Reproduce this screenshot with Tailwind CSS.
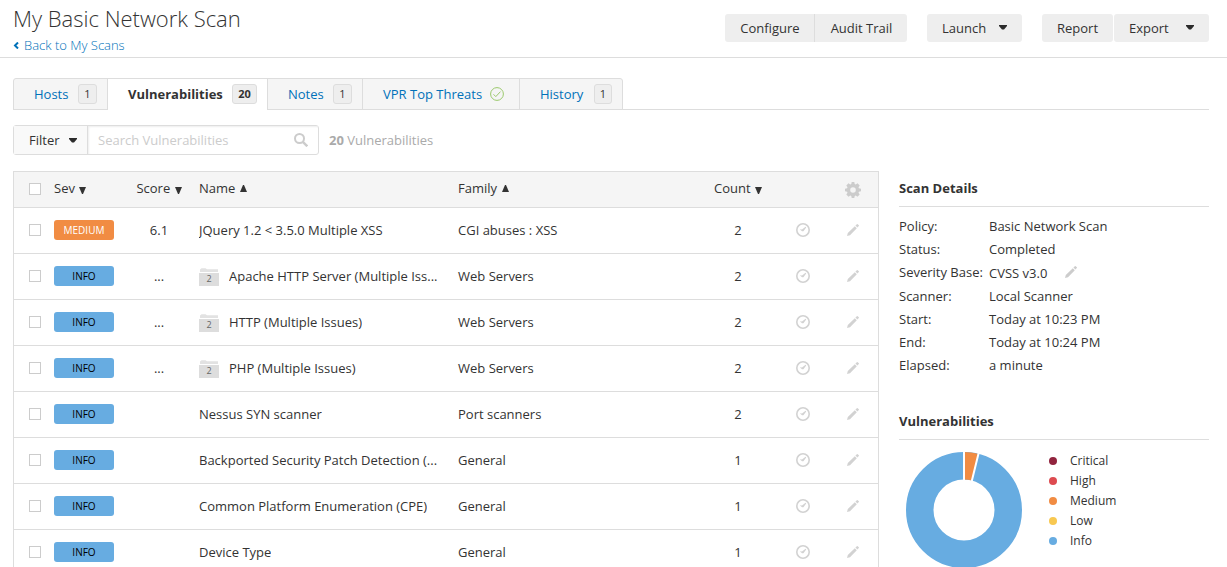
<!DOCTYPE html>
<html lang="en">
<head>
<meta charset="utf-8">
<title>My Basic Network Scan</title>
<script src="https://cdn.jsdelivr.net/npm/@tailwindcss/browser@4"></script>
</head>
<body class="bg-white font-['Open_Sans',sans-serif] text-[13px] leading-5 text-[#333] overflow-hidden">
<svg class="hidden">
  <symbol id="caret" viewBox="0 0 8 5"><path d="M0 0h8v1L5 4.500H3L0 1z" fill="#2b2b2b"/></symbol>
  <symbol id="down" viewBox="0 0 7 7"><path d="M0 0h7L4 7H3z" fill="#333"/></symbol>
  <symbol id="up" viewBox="0 0 7 7"><path d="M3 0h1l3 7H0z" fill="#333"/></symbol>
  <symbol id="clock" viewBox="0 0 14 14"><circle cx="7" cy="7" r="6.200" fill="none" stroke="currentColor" stroke-width="1.600"/><path d="M3.800 6.300l2.200.2L9.600 3.800l.6.600L7.400 8.300H6z" fill="currentColor"/></symbol>
  <symbol id="pencil" viewBox="0 0 12 12"><path d="M0 12l.8-3L7.800 2.200l2 2L3 11.200zM8.400 1.600L9.900.2q.4-.4.800 0l1.100 1.100q.4.400 0 .8l-1.400 1.500z" fill="currentColor"/></symbol>
  <symbol id="folder" viewBox="0 0 20 18"><path d="M1 4V1.500L2.500.3h4L8 1.300h11V4z" fill="#e2e2e2"/><path d="M0 5h20v13H0z" fill="#ddd"/></symbol>
  <symbol id="gear" viewBox="0 0 16 16"><path fill-rule="evenodd" fill="currentColor" d="M6.700 0h2.600l.4 2.100 1 .4L12.500 1.300l2.200 2.200-1.200 1.800.4 1L16 6.700v2.600l-2.100.4-.4 1 1.200 1.800-2.200 2.200-1.800-1.200-1 .4L9.300 16H6.700l-.4-2.100-1-.4-1.800 1.200-2.200-2.200 1.200-1.800-.4-1L0 9.300V6.700l2.100-.4.400-1L1.300 3.500l2.200-2.200 1.800 1.200 1-.4zM8 5.200a2.800 2.800 0 100 5.600 2.800 2.800 0 000-5.600z"/></symbol>
</svg>

<header class="flex h-[58px] justify-between border-b border-[#ddd] pl-[13px] pr-[18px]">
  <div class="pt-1">
    <h1 class="pb-px text-[22px] font-light leading-[29px]">My Basic Network Scan</h1>
    <a href="#" class="flex items-center gap-1 font-light leading-[22px] text-[#0071b9]">
      <svg class="h-[7px] w-[7px]" viewBox="0 0 7 7"><path d="M5 .5L2 3.500l3 3" fill="none" stroke="#0071b9" stroke-width="2"/></svg>Back to My Scans</a>
  </div>
  <div class="flex items-start gap-5 pt-[14px]">
    <div class="flex">
      <button class="h-7 w-[90px] rounded-l-[3px] border-r border-[#ddd] bg-[#eee] pl-px">Configure</button>
      <button class="h-7 w-[92px] rounded-r-[3px] bg-[#eee] pl-px">Audit Trail</button>
    </div>
    <button class="flex h-7 w-[95px] items-center justify-between rounded-[3px] bg-[#eee] px-[15px]">Launch<svg class="mb-px h-[5px] w-2"><use href="#caret"/></svg></button>
    <div class="flex gap-px">
      <button class="h-7 w-[71px] rounded-[3px] bg-[#eee]">Report</button>
      <button class="flex h-7 w-[95px] items-center justify-between rounded-[3px] bg-[#eee] px-[15px]">Export<svg class="mb-px h-[5px] w-2"><use href="#caret"/></svg></button>
    </div>
  </div>
</header>

<main class="pl-[13px] pr-[18px] pt-5">
  <nav class="flex border-b border-[#ddd]">
    <div class="-mb-px flex h-8 rounded-t-[3px] border border-[#ddd] bg-[#f5f5f5] text-[#0071b9]">
      <a href="#" class="flex w-[94px] items-center justify-between border-r border-[#ddd] pl-5 pr-[10px]">Hosts<span class="flex h-5 w-[19px] items-center justify-center rounded-[3px] border border-[#ddd] bg-[#eee] text-[11px] text-[#333]">1</span></a>
      <a href="#" class="-mb-px flex w-[160px] items-center justify-between border-r border-[#ddd] bg-white pb-px pl-5 pr-[10px] font-bold text-[#333]">Vulnerabilities<span class="flex h-5 w-[25px] items-center justify-center rounded-[3px] border border-[#ddd] bg-[#eee] text-[11px] text-[#333]">20</span></a>
      <a href="#" class="flex w-[95px] items-center justify-between border-r border-[#ddd] pl-5 pr-[10px]">Notes<span class="flex h-5 w-[19px] items-center justify-center rounded-[3px] border border-[#ddd] bg-[#eee] text-[11px] text-[#333]">1</span></a>
      <a href="#" class="flex w-[157px] items-center justify-between border-r border-[#ddd] pl-5 pr-[15px]">VPR Top Threats<svg class="h-[14px] w-[14px]" viewBox="0 0 14 14" fill="none" stroke="#9bc96c"><circle cx="7" cy="7" r="6.400"/><path d="M3.500 7.300l2.300 2.300 4.700-5"/></svg></a>
      <a href="#" class="flex w-[102px] items-center justify-between pl-5 pr-[10px]">History<span class="flex h-5 w-[18px] items-center justify-center rounded-[3px] border border-[#ddd] bg-[#eee] text-[11px] text-[#333]">1</span></a>
    </div>
  </nav>

  <div class="mt-[15px] flex items-center">
    <div class="flex h-[30px] w-[306px] rounded-[3px] border border-[#ddd]">
      <button class="flex w-[74px] items-center justify-between border-r border-[#ddd] bg-[#f9f9f9] pl-[15px] pr-[10px]">Filter<svg class="h-[5px] w-2"><use href="#caret"/></svg></button>
      <label class="flex min-w-0 flex-1 items-center pl-[10px] pr-[10px] shadow-[inset_1px_1px_2px_#eee]">
        <input type="text" aria-label="Search Vulnerabilities" placeholder="Search Vulnerabilities" class="min-w-0 flex-1 bg-transparent outline-none placeholder:text-[#ccc]">
        <svg class="h-[14px] w-[14px]" viewBox="0 0 14 14" fill="none" stroke="#ccc" stroke-width="2"><circle cx="5.500" cy="5.500" r="4.500"/><path d="M8.800 8.800l4.500 4.500" stroke-width="2.400"/></svg>
      </label>
    </div>
    <p class="ml-[10px] text-[#aaa]"><b>20</b> Vulnerabilities</p>
  </div>

  <div class="mt-4 flex items-start gap-5">
    <div class="min-w-0 flex-1 border border-[#ddd]">
      <table class="w-full table-fixed border-collapse">
        <colgroup><col class="w-10"><col class="w-[65px]"><col class="w-20"><col><col class="w-60"><col class="w-20"><col class="w-[50px]"><col class="w-[50px]"></colgroup>
        <thead>
          <tr class="h-[35px] bg-[#f5f5f5] text-left">
            <th class="pl-[15px]"><input type="checkbox" aria-label="Select all" class="block h-3 w-3 appearance-none border border-[#ccc] bg-white"></th>
            <th class="pb-[2px] font-normal">Sev <svg class="ml-px inline h-[7px] w-[7px] align-[-1px]"><use href="#down"/></svg></th>
            <th class="pb-[2px] text-center font-normal">Score <svg class="ml-px inline h-[7px] w-[7px] align-[-1px]"><use href="#down"/></svg></th>
            <th class="pb-[2px] font-normal">Name <svg class="ml-px inline h-[7px] w-[7px] align-[1px]"><use href="#up"/></svg></th>
            <th class="pb-[2px] font-normal">Family <svg class="ml-[2px] inline h-[7px] w-[7px] align-[1px]"><use href="#up"/></svg></th>
            <th class="pb-[2px] text-center font-normal">Count <svg class="ml-px inline h-[7px] w-[7px] align-[-1px]"><use href="#down"/></svg></th>
            <th></th>
            <th class="pt-[2px]"><button aria-label="Settings" class="mx-auto block text-[#ccc]"><svg class="block h-4 w-4"><use href="#gear"/></svg></button></th>
          </tr>
        </thead>
        <tbody id="rows"></tbody>
      </table>
    </div>

    <aside class="w-[310px] shrink-0">
      <h2 class="border-b border-[#ddd] pb-2 pt-[7px] font-bold">Scan Details</h2>
      <dl class="mt-2 grid grid-cols-[90px_1fr] leading-[23px]">
        <dt>Policy:</dt><dd>Basic Network Scan</dd>
        <dt>Status:</dt><dd>Completed</dd>
        <dt>Severity Base:</dt><dd class="flex items-center gap-[18px] pt-px">CVSS v3.0 <button aria-label="Edit severity base" class="pb-[3px] text-[#ccc]"><svg class="block h-3 w-3"><use href="#pencil"/></svg></button></dd>
        <dt>Scanner:</dt><dd>Local Scanner</dd>
        <dt>Start:</dt><dd>Today at 10:23 PM</dd>
        <dt>End:</dt><dd>Today at 10:24 PM</dd>
        <dt>Elapsed:</dt><dd>a minute</dd>
      </dl>
      <h2 class="mt-[34px] border-b border-[#ddd] pb-2 font-bold">Vulnerabilities</h2>
      <div class="flex pl-[7px] pt-3">
        <svg class="h-[116px] w-[116px]" viewBox="0 0 116 116">
          <circle cx="58" cy="58" r="44.250" fill="none" stroke="#67ace1" stroke-width="27.500"/>
          <path d="M58 0A58 58 0 0 1 72.600 1.900L65.700 28.500A30.500 30.500 0 0 0 58 27.500z" fill="#f18c43"/>
          <path d="M58 -1V30M72.900 0L65.300 31" stroke="#fff" stroke-width="2"/>
        </svg>
        <ul class="-mt-px ml-[27px] text-[12px]">
          <li class="flex items-center gap-[13px]"><span class="h-2 w-2 rounded-full bg-[#91243e]"></span>Critical</li>
          <li class="flex items-center gap-[13px]"><span class="h-2 w-2 rounded-full bg-[#dd4b50]"></span>High</li>
          <li class="flex items-center gap-[13px]"><span class="h-2 w-2 rounded-full bg-[#f18c43]"></span>Medium</li>
          <li class="flex items-center gap-[13px]"><span class="h-2 w-2 rounded-full bg-[#f8c851]"></span>Low</li>
          <li class="flex items-center gap-[13px]"><span class="h-2 w-2 rounded-full bg-[#67ace1]"></span>Info</li>
        </ul>
      </div>
    </aside>
  </div>
</main>
<script>
const data = [
  ['MEDIUM', '6.1', 'JQuery 1.2 &lt; 3.5.0 Multiple XSS', 'CGI abuses : XSS', 2],
  ['INFO', '...', 'Apache HTTP Server (Multiple Iss...', 'Web Servers', 2, 2],
  ['INFO', '...', 'HTTP (Multiple Issues)', 'Web Servers', 2, 2],
  ['INFO', '...', 'PHP (Multiple Issues)', 'Web Servers', 2, 2],
  ['INFO', '', 'Nessus SYN scanner', 'Port scanners', 2],
  ['INFO', '', 'Backported Security Patch Detection (...', 'General', 1],
  ['INFO', '', 'Common Platform Enumeration (CPE)', 'General', 1],
  ['INFO', '', 'Device Type', 'General', 1],
];
document.getElementById('rows').innerHTML = data.map(([sev, score, name, family, count, group]) => `
<tr class="h-[46px] border-t border-[#ddd]">
  <td class="pl-[15px]"><input type="checkbox" aria-label="Select ${name}" class="block h-3 w-3 appearance-none border border-[#ccc] bg-white"></td>
  <td><span class="${sev === 'INFO' ? 'bg-[#67ace1] text-black' : 'bg-[#f18c43] text-white'} block h-5 w-[60px] rounded-[3px] text-center text-[10px] leading-5">${sev}</span></td>
  <td class="text-center">${score}</td>
  <td class="pr-4"><div class="flex items-center gap-[10px]">${group ? `<span class="relative mt-[2px] block h-[18px] w-5 shrink-0"><svg class="block h-[18px] w-5"><use href="#folder"/></svg><span class="absolute inset-x-0 bottom-0 text-center text-[9px] leading-[14px] text-[#666]">${group}</span></span>` : ''}<span class="truncate">${name}</span></div></td>
  <td>${family}</td>
  <td class="text-center">${count}</td>
  <td><button aria-label="Snooze" class="mx-auto block text-[#d2d2d2]"><svg class="block h-[14px] w-[14px]"><use href="#clock"/></svg></button></td>
  <td><button aria-label="Modify" class="mx-auto block text-[#d2d2d2]"><svg class="block h-3 w-3"><use href="#pencil"/></svg></button></td>
</tr>`).join('');
</script>
</body>
</html>
